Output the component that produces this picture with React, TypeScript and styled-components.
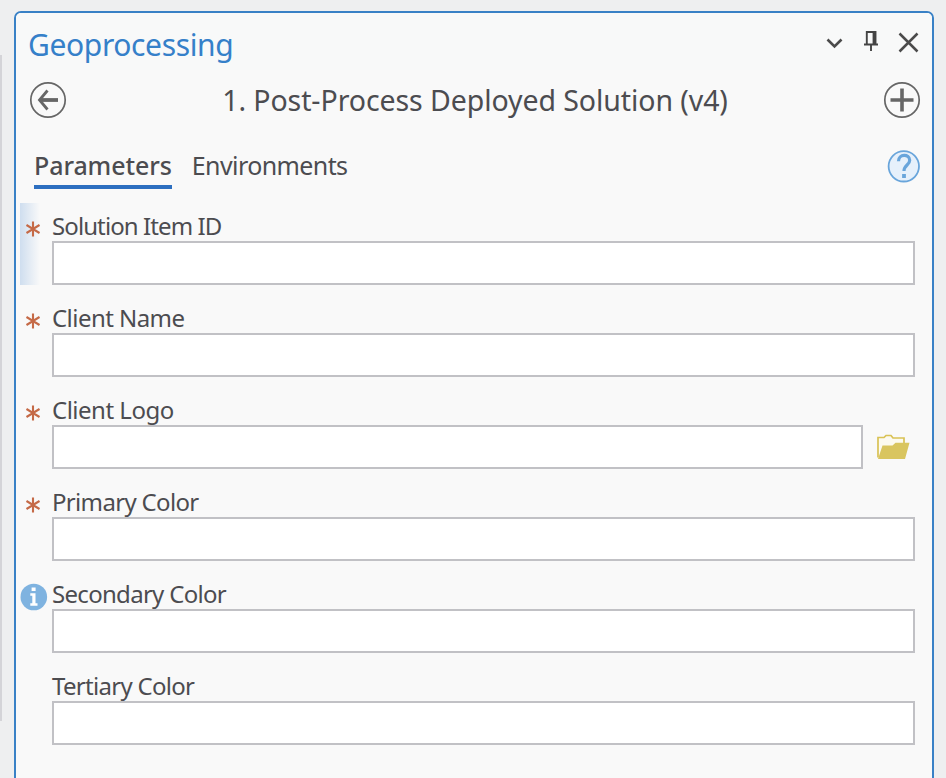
import React from "react";
import styled, { createGlobalStyle } from "styled-components";

const GlobalStyle = createGlobalStyle`
  * { box-sizing: border-box; }
  html, body { margin: 0; padding: 0; background: #eeeff0; }
  body { font-family: "Noto Sans", "Open Sans", sans-serif; color: #4c4c50; overflow: hidden; }
  button { background: none; border: 0; padding: 0; margin: 0; font: inherit; color: inherit; display: block; }
  svg { display: block; }
`;

const Page = styled.main`
  display: flex;
  width: 946px;
  height: 778px;
  overflow: hidden;
`;

const NeighbourEdge = styled.div`
  width: 2px;
  height: 666px;
  margin-top: 55px;
  background: #d4d4d8;
`;

const Panel = styled.section`
  width: 920px;
  height: 790px;
  flex: none;
  margin: 11px 0 0 12px;
  border: 2px solid #3981c6;
  border-radius: 7px;
  background: #f9f9f9;
`;

const TitleBar = styled.header`
  display: flex;
  height: 57px;
  padding: 0 12px 0 12px;
  background: #f8f9f9;
  border-radius: 5px 5px 0 0;
`;

const Title = styled.h1`
  flex: 1;
  margin: 0;
  padding-top: 10px;
  font-size: 30px;
  font-weight: 400;
  line-height: 44px;
  letter-spacing: -0.37px;
  color: #3580c9;
`;

const WindowButtons = styled.div`
  display: flex;
  align-items: flex-start;
  gap: 12px;
  padding-top: 17px;
`;

const ToolBar = styled.div`
  display: flex;
  align-items: flex-start;
  justify-content: space-between;
  height: 62px;
  padding: 10px 11px 0 13px;
`;

const ToolButton = styled.button`
  height: 38px;
  margin-top: 1px;
`;

const ToolName = styled.h2`
  margin: 0;
  font-size: 28.5px;
  font-weight: 400;
  line-height: 40px;
  letter-spacing: -0.08px;
  white-space: nowrap;
`;

const TabBar = styled.nav`
  display: flex;
  align-items: flex-start;
  height: 71px;
  padding: 16px 11px 0 18px;
`;

const Tab = styled.button<{ $active?: boolean; $spacing: number }>`
  height: 41px;
  margin-right: 20px;
  padding-bottom: 4px;
  font-size: 25px;
  font-weight: ${(p) => (p.$active ? 500 : 400)};
  line-height: 34px;
  letter-spacing: ${(p) => p.$spacing}px;
  white-space: nowrap;
  border-bottom: 4px solid ${(p) => (p.$active ? "#2d6fc0" : "transparent")};
`;

const HelpButton = styled.button`
  margin: 1px 0 0 auto;
`;

const Form = styled.form`
  display: grid;
  grid-auto-rows: 82px;
  row-gap: 10px;
  padding-left: 4px;
`;

const Field = styled.div<{ $focused?: boolean }>`
  display: grid;
  grid-template-columns: 32px 863px;
  background: ${(p) => (p.$focused ? "linear-gradient(to right, #cfdeef, #f9f9f9 20px)" : "none")};
`;

const Marker = styled.div<{ $info?: boolean }>`
  padding: ${(p) => (p.$info ? "12px 0 0 0" : "18px 0 0 6px")};
`;

const Label = styled.label<{ $spacing: number }>`
  display: block;
  height: 38px;
  padding-top: 5px;
  font-size: 24px;
  line-height: 36px;
  letter-spacing: ${(p) => p.$spacing}px;
  white-space: nowrap;
`;

const InputRow = styled.div`
  display: flex;
  align-items: center;
  gap: 13px;
`;

const Input = styled.input<{ $short?: boolean }>`
  width: ${(p) => (p.$short ? 811 : 863)}px;
  height: 44px;
  padding: 0 8px;
  border: 2px solid #c1c1c5;
  border-radius: 0;
  background: #fff;
  font: inherit;
  outline: none;
`;

const ChevronIcon = () => (
  <svg width="26" height="28" viewBox="0 0 26 28" fill="none" stroke="#4b4b4b" strokeWidth="2.6">
    <path d="M5.500 9.500l7 7 7-7" />
  </svg>
);

const PinIcon = () => (
  <svg width="24" height="28" viewBox="0 0 24 28" fill="none" stroke="#444" strokeWidth="1.9">
    <path d="M6.800 14V2h8.700v12M4 14.500h14M11 14v7" />
    <path d="M14 2v12" strokeWidth="2.8" />
  </svg>
);

const CloseIcon = () => (
  <svg width="24" height="28" viewBox="0 0 24 28" fill="none" stroke="#4b4b4b" strokeWidth="2.5">
    <path d="M3.500 3.500l18 18M21.500 3.500l-18 18" />
  </svg>
);

const BackIcon = () => (
  <svg width="38" height="38" viewBox="0 0 38 38" fill="none" stroke="#666">
    <circle cx="19" cy="19" r="17.2" strokeWidth="1.7" />
    <path d="M29 19H11" strokeWidth="3.8" />
    <path d="M18.500 9.500L10.500 19l8 9.500" strokeWidth="2.8" />
  </svg>
);

const AddIcon = () => (
  <svg width="38" height="38" viewBox="0 0 38 38" fill="none" stroke="#666">
    <circle cx="19" cy="19" r="17.2" strokeWidth="1.7" />
    <path d="M19 7.500v23M7.500 19h23" strokeWidth="3.600" />
  </svg>
);

const HelpIcon = () => (
  <svg width="34" height="34" viewBox="0 0 34 34" fill="none" stroke="#69a5db">
    <circle cx="16.800" cy="17.300" r="15.200" fill="#e6f0fb" strokeWidth="1.800" />
    <path d="M11.500 12.200c0-7.600 11.200-7.400 11.200-1 0 5-5.700 4.700-5.700 10.800" strokeWidth="3.2" />
    <path d="M17 25v4" strokeWidth="3.800" />
  </svg>
);

const RequiredIcon = () => (
  <svg width="14" height="16" viewBox="0 0 14 16" fill="none" stroke="#c56a47" strokeWidth="2.100">
    <path d="M7 .5v15M.5 4l13 8M13.500 4l-13 8" />
  </svg>
);

const InfoIcon = () => (
  <svg width="28" height="28" viewBox="0 0 28 28">
    <circle cx="13.800" cy="14" r="13.300" fill="#7fb3e0" />
    <path d="M11.600 4.500h4v3.500h-4zM10.300 10.300h5.200v10h2v2.400h-7.200v-2.400h2v-7.600h-2z" fill="#fff" />
  </svg>
);

const FolderIcon = () => (
  <svg width="34" height="28" viewBox="0 0 34 28">
    <path d="M2 24.500V4.500h6l2-2h5l2 2.500h11V11" fill="#fcfaf0" stroke="#d9c255" strokeWidth="1.700" />
    <path d="M2 26L6.500 12.500h10l3-2.700H33.500L29 26z" fill="#d9c55f" />
  </svg>
);

type FieldSpec = {
  label: string;
  spacing: number;
  required?: boolean;
  info?: boolean;
  focused?: boolean;
  browse?: boolean;
};

const fields: FieldSpec[] = [
  { label: "Solution Item ID", spacing: -0.9, required: true, focused: true },
  { label: "Client Name", spacing: -0.55, required: true },
  { label: "Client Logo", spacing: -0.5, required: true, browse: true },
  { label: "Primary Color", spacing: -0.67, required: true },
  { label: "Secondary Color", spacing: -0.7, info: true },
  { label: "Tertiary Color", spacing: -0.7 },
];

export default function App() {
  return (
    <Page>
      <GlobalStyle />
      <NeighbourEdge />
      <Panel>
        <TitleBar>
          <Title>Geoprocessing</Title>
          <WindowButtons>
            <button aria-label="Options"><ChevronIcon /></button>
            <button aria-label="Pin"><PinIcon /></button>
            <button aria-label="Close"><CloseIcon /></button>
          </WindowButtons>
        </TitleBar>
        <ToolBar>
          <ToolButton aria-label="Back"><BackIcon /></ToolButton>
          <ToolName>1. Post-Process Deployed Solution (v4)</ToolName>
          <ToolButton aria-label="Add"><AddIcon /></ToolButton>
        </ToolBar>
        <TabBar>
          <Tab $active $spacing={-0.08}>Parameters</Tab>
          <Tab $spacing={-0.6}>Environments</Tab>
          <HelpButton aria-label="Help"><HelpIcon /></HelpButton>
        </TabBar>
        <Form>
          {fields.map((f) => {
            const id = f.label.toLowerCase().replace(/ /g, "-");
            return (
              <Field key={id} $focused={f.focused}>
                <Marker $info={f.info}>
                  {f.required && <RequiredIcon />}
                  {f.info && <InfoIcon />}
                </Marker>
                <div>
                  <Label htmlFor={id} $spacing={f.spacing}>{f.label}</Label>
                  <InputRow>
                    <Input id={id} $short={f.browse} />
                    {f.browse && <button type="button" aria-label="Browse"><FolderIcon /></button>}
                  </InputRow>
                </div>
              </Field>
            );
          })}
        </Form>
      </Panel>
    </Page>
  );
}
